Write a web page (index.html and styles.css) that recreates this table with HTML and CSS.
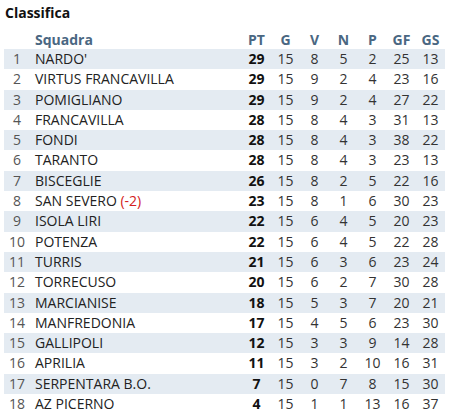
FILE: index.html
```html
<!DOCTYPE html>
<html lang="it">
<head>
<meta charset="utf-8">
<link rel="stylesheet" href="styles.css">
</head>
<body>
<div class="box">
  <h2 class="title">Classifica</h2>
  <table class="standings">
    <thead>
      <tr><th class="pos"></th><th class="team">Squadra</th><th>PT</th><th>G</th><th>V</th><th>N</th><th>P</th><th>GF</th><th>GS</th></tr>
    </thead>
    <tbody>
      <tr><td class="pos">1</td><td class="team">NARDO'</td><td class="pt">29</td><td>15</td><td>8</td><td>5</td><td>2</td><td>25</td><td>13</td></tr>
      <tr><td class="pos">2</td><td class="team">VIRTUS FRANCAVILLA</td><td class="pt">29</td><td>15</td><td>9</td><td>2</td><td>4</td><td>23</td><td>16</td></tr>
      <tr><td class="pos">3</td><td class="team">POMIGLIANO</td><td class="pt">29</td><td>15</td><td>9</td><td>2</td><td>4</td><td>27</td><td>22</td></tr>
      <tr><td class="pos">4</td><td class="team">FRANCAVILLA</td><td class="pt">28</td><td>15</td><td>8</td><td>4</td><td>3</td><td>31</td><td>13</td></tr>
      <tr><td class="pos">5</td><td class="team">FONDI</td><td class="pt">28</td><td>15</td><td>8</td><td>4</td><td>3</td><td>38</td><td>22</td></tr>
      <tr><td class="pos">6</td><td class="team">TARANTO</td><td class="pt">28</td><td>15</td><td>8</td><td>4</td><td>3</td><td>23</td><td>13</td></tr>
      <tr><td class="pos">7</td><td class="team">BISCEGLIE</td><td class="pt">26</td><td>15</td><td>8</td><td>2</td><td>5</td><td>22</td><td>16</td></tr>
      <tr><td class="pos">8</td><td class="team">SAN SEVERO <span class="pen">(-2)</span></td><td class="pt">23</td><td>15</td><td>8</td><td>1</td><td>6</td><td>30</td><td>23</td></tr>
      <tr><td class="pos">9</td><td class="team">ISOLA LIRI</td><td class="pt">22</td><td>15</td><td>6</td><td>4</td><td>5</td><td>20</td><td>23</td></tr>
      <tr><td class="pos">10</td><td class="team">POTENZA</td><td class="pt">22</td><td>15</td><td>6</td><td>4</td><td>5</td><td>22</td><td>28</td></tr>
      <tr><td class="pos">11</td><td class="team">TURRIS</td><td class="pt">21</td><td>15</td><td>6</td><td>3</td><td>6</td><td>23</td><td>24</td></tr>
      <tr><td class="pos">12</td><td class="team">TORRECUSO</td><td class="pt">20</td><td>15</td><td>6</td><td>2</td><td>7</td><td>30</td><td>28</td></tr>
      <tr><td class="pos">13</td><td class="team">MARCIANISE</td><td class="pt">18</td><td>15</td><td>5</td><td>3</td><td>7</td><td>20</td><td>21</td></tr>
      <tr><td class="pos">14</td><td class="team">MANFREDONIA</td><td class="pt">17</td><td>15</td><td>4</td><td>5</td><td>6</td><td>23</td><td>30</td></tr>
      <tr><td class="pos">15</td><td class="team">GALLIPOLI</td><td class="pt">12</td><td>15</td><td>3</td><td>3</td><td>9</td><td>14</td><td>28</td></tr>
      <tr><td class="pos">16</td><td class="team">APRILIA</td><td class="pt">11</td><td>15</td><td>3</td><td>2</td><td>10</td><td>16</td><td>31</td></tr>
      <tr><td class="pos">17</td><td class="team">SERPENTARA B.O.</td><td class="pt">7</td><td>15</td><td>0</td><td>7</td><td>8</td><td>15</td><td>30</td></tr>
      <tr><td class="pos">18</td><td class="team">AZ PICERNO</td><td class="pt">4</td><td>15</td><td>1</td><td>1</td><td>13</td><td>16</td><td>37</td></tr>
    </tbody>
  </table>
</div>
</body>
</html>
```
FILE: styles.css
```css
html, body {
  margin: 0;
  padding: 0;
  background: #ffffff;
}
body {
  font-family: "Open Sans", "Liberation Sans", sans-serif;
  color: #222;
}
.box {
  padding: 2px 5px 0 4px;
}
.title {
  margin: 0 0 6px 1px;
  font-size: 14px;
  font-weight: 700;
  line-height: 22px;
  color: #111;
}
.standings {
  width: 100%;
  border-collapse: collapse;
  font-size: 14px;
}
.standings th {
  color: #4a6782;
  font-weight: 700;
  height: 19px;
  line-height: 19px;
  padding: 0;
  text-align: center;
  width: 29px;
}
.standings td {
  height: 20.3px;
  line-height: 20.3px;
  padding: 0;
  text-align: center;
  color: #333;
}
.standings th.team,
.standings td.team {
  text-align: left;
  width: auto;
  padding-left: 5px;
  color: #222;
}
.standings th.team {
  color: #4a6782;
}
.standings th.pos,
.standings td.pos {
  width: 26px;
  color: #555;
}
.standings tbody tr:nth-child(odd) {
  background: #e4ebf2;
}
.standings td.pt {
  font-weight: 700;
  color: #111;
}
.pen {
  color: #d42020;
}
```
